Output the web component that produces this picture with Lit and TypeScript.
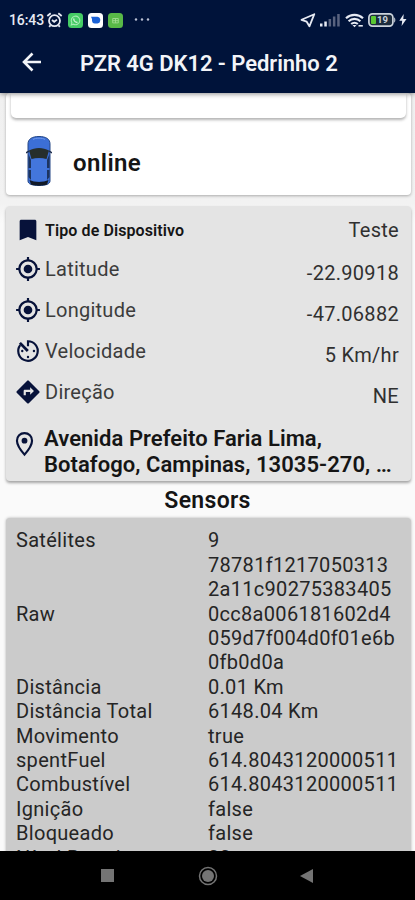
import { LitElement, html, css, svg } from "lit";
import { customElement } from "lit/decorators.js";

const target = svg`<path fill="currentColor" d="M12 8a4 4 0 1 0 0 8 4 4 0 0 0 0-8zm8.94 3A8.99 8.99 0 0 0 13 3.06V1h-2v2.06A8.99 8.99 0 0 0 3.06 11H1v2h2.06A8.99 8.99 0 0 0 11 20.94V23h2v-2.06A8.99 8.99 0 0 0 20.94 13H23v-2h-2.06zM12 19a7 7 0 1 1 0-14 7 7 0 0 1 0 14z"/>`;
const icons = {
  bookmark: svg`<path fill="currentColor" d="M18 2.500H6C4.800 2.500 4.300 3 4.300 4v17.500l7.700-3 7.700 3V4c0-1-.5-1.500-1.700-1.500z"/>`,
  target,
  speed: svg`<g fill="none" stroke="currentColor" stroke-width="2"><path d="M12 7.500V3a9 9 0 1 1-7.200 3.600"/><path d="M4.500 4.500 11.800 12" stroke-width="2.600"/></g><g fill="currentColor"><circle cx="12" cy="17.500" r="1.100"/><circle cx="17.500" cy="12" r="1.100"/><circle cx="6.700" cy="12" r="1.100"/></g>`,
  direction: svg`<path fill="currentColor" d="m22.400 11.300-9.700-9.700a1 1 0 0 0-1.410 0L1.600 11.300a1 1 0 0 0 0 1.410l9.700 9.700c.390.390 1.020.390 1.410 0l9.700-9.700a1 1 0 0 0 0-1.410zM14 14.500V12h-4v3H8v-4c0-.550.450-1 1-1h5V7.500l3.500 3.500-3.500 3.500z"/>`,
  place: svg`<path fill="none" stroke="currentColor" stroke-width="1.900" d="M12 1.900c-3.900 0-6.700 2.900-6.700 6.700 0 4.700 6.700 12.400 6.700 12.400S18.700 13.300 18.700 8.600c0-3.800-2.800-6.700-6.700-6.700z"/><circle cx="12" cy="8.600" r="2.600" fill="currentColor"/>`,
};

const details = [
  { icon: icons.bookmark, label: "Tipo de Dispositivo", value: "Teste", strong: true },
  { icon: icons.target, label: "Latitude", value: "-22.90918" },
  { icon: icons.target, label: "Longitude", value: "-47.06882" },
  { icon: icons.speed, label: "Velocidade", value: "5 Km/hr" },
  { icon: icons.direction, label: "Direção", value: "NE" },
];

const sensors: [string, string[]][] = [
  ["Satélites", ["9"]],
  ["Raw", ["78781f1217050313", "2a11c90275383405", "0cc8a006181602d4", "059d7f004d0f01e6b", "0fb0d0a"]],
  ["Distância", ["0.01 Km"]],
  ["Distância Total", ["6148.04 Km"]],
  ["Movimento", ["true"]],
  ["spentFuel", ["614.8043120000511"]],
  ["Combustível", ["614.8043120000511"]],
  ["Ignição", ["false"]],
  ["Bloqueado", ["false"]],
  ["Nível Bateria", ["00"]],
];

@customElement("status-bar")
class StatusBar extends LitElement {
  static styles = css`
    :host { display: flex; height: 40px; align-items: center; padding: 0 8px 0 9px; color: #e6eaf3; font-size: 14px; box-sizing: border-box; }
    svg { display: block; flex: none; }
    .time { width: 37px; white-space: nowrap; letter-spacing: -0.1px; font-weight: 500; font-size: 14px; }
    .left { display: flex; align-items: center; flex: 1; }
    .right { display: flex; align-items: center; }
    .alarm { margin-right: 5px; }
    .app { margin-right: 5px; }
    .dots { margin-left: 6px; }
    .nav { margin-right: 4px; }
    .signal { margin-right: 5px; }
    .wifi { margin-right: 4px; }
    .bolt { margin-left: 3px; }
  `;
  render() {
    return html`
      <div class="left">
        <span class="time">16:43</span>
        <svg class="alarm" width="17" height="16" viewBox="0 0 17 16" fill="none" stroke="currentColor" stroke-width="1.800"><circle cx="8.500" cy="8.700" r="5.500"/><path d="M1.300 4 4.700 1.200M15.700 4 12.300 1.200M6 8l2.200 1.800L11 7.600M4.500 13.200l-1.300 1.700M12.500 13.200l1.300 1.700"/></svg>
        <svg class="app" width="15" height="15" viewBox="0 0 15 15"><rect width="15" height="15" rx="3.500" fill="#45cc65"/><path d="M3.300 11.900l.6-2.200A4.300 4.300 0 1 1 5.500 11.200z" fill="none" stroke="#a5ecb3" stroke-width="1.100"/><path d="M5.700 5.400c0 2.300 1.800 4 3.800 4.100" fill="none" stroke="#c5f3ce" stroke-width="1.500"/></svg>
        <svg class="app" width="15" height="15" viewBox="0 0 15 15"><rect width="15" height="15" rx="3.500" fill="#fff"/><path d="M3 3.700h6.500a3 3 0 0 1 2.700 2.300v1.800a3 3 0 0 1-2.700 2.700H6.800A3 3 0 0 1 4 7.900V6z" fill="#1b61d6"/></svg>
        <svg class="app" width="15" height="15" viewBox="0 0 15 15"><rect width="15" height="15" rx="3.500" fill="#58b947"/><path d="M4.700 5.500h5.600v4.400H4.700zM7.500 5.500v4.400M4.700 7.700h5.600" fill="none" stroke="#a3db92" stroke-width=".9"/></svg>
        <svg class="dots" width="16" height="4" viewBox="0 0 16 4" fill="#b9c1d3"><circle cx="2" cy="1.500" r="1.200"/><circle cx="8" cy="1.500" r="1.200"/><circle cx="14" cy="1.500" r="1.200"/></svg>
      </div>
      <div class="right">
        <svg class="nav" width="16" height="15" viewBox="0 0 16 15" fill="none" stroke="currentColor" stroke-width="1.800" stroke-linejoin="round"><path d="M14.300 1.200 1.500 6.800l5.200 1.900 2.700 4.600z"/></svg>
        <svg class="signal" width="20" height="14" viewBox="0 0 20 14"><path fill="#e6eaf3" d="M0 10.500h2.500v3H0zM4.300 8.500h2.500v5H4.300z"/><path fill="#59637f" d="M8.600 6h2.500v7.500H8.600zM12.900 3.500h2.500v10h-2.500zM17.200 1h2.500v12.500h-2.500z"/></svg>
        <svg class="wifi" width="19" height="15" viewBox="0 0 19 15" fill="none" stroke="currentColor" stroke-width="2.200"><path d="M1 5.200a12.500 12.500 0 0 1 17 0M3.600 8.200a8.700 8.700 0 0 1 11.800 0M6.200 11a5 5 0 0 1 6.600 0"/><path d="m9.500 14.300-2-2.300h4z" fill="currentColor" stroke="none"/><path d="M13.500 12.800h4.300" stroke-width="1.600"/></svg>
        <svg width="28" height="14" viewBox="0 0 28 14"><rect x=".9" y=".9" width="24" height="12.200" rx="3.500" fill="#1b2b3d" stroke="#ccd4dc" stroke-width="1.700"/><path d="M26.200 4.500c1.500.5 1.500 4.500 0 5z" fill="#ccd4dc"/><rect x="3" y="3" width="5" height="8" rx="1" fill="#5ac832"/><text x="9" y="10.300" font-size="9.500" font-weight="700" fill="#ccd4dc">19</text></svg>
        <svg class="bolt" width="8" height="12" viewBox="0 0 8 12"><path d="M4.700 0 .3 6.800h2.900L2.600 12 7.500 4.900H4.300z" fill="#e6eaf3"/></svg>
      </div>`;
  }
}

@customElement("app-root")
class AppRoot extends LitElement {
  static styles = css`
    :host { display: flex; flex-direction: column; width: 415px; height: 900px; overflow: hidden; background: #fafafa; color: #151515; font-family: Roboto, "Liberation Sans", sans-serif; }
    * { box-sizing: border-box; }
    svg { display: block; flex: none; }
    header { flex: none; height: 93px; background: #00133a; color: #f2f4f8; box-shadow: 0 1px 5px rgba(0,0,0,.45); z-index: 1; }
    .bar { display: flex; align-items: center; height: 44px; padding: 0 21px; }
    .title { margin-left: 37px; padding-top: 2px; font-size: 22px; font-weight: 600; white-space: nowrap; letter-spacing: -.05px; }
    main { flex: 1; min-height: 0; overflow: hidden; padding: 0 4px 0 6px; background: linear-gradient(#f0f0f0, #f2f2f2 110px, #fafafa 130px); }
    .status { height: 102px; background: #fff; border-radius: 4px; box-shadow: 0 1px 3px rgba(0,0,0,.3); padding: 0 5px; }
    .previous { height: 25px; border-radius: 0 0 5px 5px; background: #fff; box-shadow: 0 2px 3px rgba(0,0,0,.3); }
    .online { display: flex; align-items: center; gap: 21px; padding: 17px 0 0 15px; font-size: 24px; font-weight: 600; letter-spacing: .4px; }
    .online span { padding-top: 3px; }
    .details { height: 275px; margin-top: 11px; padding: 4px 12px 0 9px; background: #e4e4e4; border-radius: 4px; box-shadow: 0 2px 3px rgba(0,0,0,.35); }
    .row { display: flex; align-items: center; height: 41px; }
    .row svg { margin-top: -2px; margin-left: -.5px; margin-right: .5px; }
    .row svg, .address svg { color: #07123a; }
    .label { margin-left: 4px; flex: 1; font-size: 20px; color: #3c3c3c; letter-spacing: .25px; padding-bottom: 2px; }
    .value { font-size: 20px; color: #303030; letter-spacing: .3px; padding-top: 6px; }
    .first { height: 39px; }
    .first svg { margin-top: 0; }
    .first .label { font-size: 16px; font-weight: 600; color: #151515; letter-spacing: .1px; padding: 2px 0 0; }
    .first .value { padding: 0; }
    .address { display: flex; align-items: flex-start; padding-top: 13px; font-size: 22px; line-height: 26px; font-weight: 600; white-space: nowrap; letter-spacing: .05px; }
    .address svg { margin: 5px 6px 0 -4px; }
    h2 { margin: 0; height: 37px; font-size: 23px; line-height: 39px; text-align: center; font-weight: 600; padding-right: 2px; letter-spacing: .3px; }
    .sensors { padding: 10.300px 0 20px 10px; background: #cbcbcb; border-radius: 4px 4px 0 0; box-shadow: 0 0 3px rgba(0,0,0,.3); font-size: 20px; line-height: 24.400px; color: #252525; letter-spacing: .3px; }
    .sensor { display: grid; grid-template-columns: 192px 1fr; align-items: center; white-space: nowrap; }
    nav { flex: none; height: 49px; background: #000; display: flex; align-items: center; padding-left: 101px; color: #747474; z-index: 1; }
    .home { margin-left: 84px; }
    .back { margin-left: 82px; }
  `;
  render() {
    return html`
      <header>
        <status-bar></status-bar>
        <div class="bar">
          <svg width="22" height="20" viewBox="0 0 22 20" fill="none" stroke="currentColor" stroke-width="2.600"><path d="M20 10H3.500M11.500 1.500 3 10l8.500 8.500"/></svg>
          <span class="title">PZR 4G DK12 - Pedrinho 2</span>
        </div>
      </header>
      <main>
        <section class="status">
          <div class="previous"></div>
          <div class="online">
            <svg width="26" height="52" viewBox="0 0 26 52">
              <path d="M2 9C2 4 6 1.500 13 1.500S24 4 24 9v37c0 3-4 4.500-11 4.500S2 49 2 46z" fill="#3c6fd6" stroke="#244786"/>
              <path d="M0 18l3-2M26 18l-3-2" stroke="#1c2b4a" stroke-width="1.500"/>
              <path d="M3 15.500c6-3.500 14-3.500 20 0L20.500 24c-5-1.500-10-1.500-15 0z" fill="#262e2c"/>
              <path d="M2.500 19 5 25v20l-2.500-3zM23.500 19 21 25v20l2.500-3z" fill="#1d345f"/>
              <path d="M2.500 34h2.500M21 34h2.500" stroke="#3c6fd6" stroke-width="2"/>
              <path d="M5 24.500c5-1.500 11-1.500 16 0V46H5z" fill="#4376dc"/>
              <path d="M3.500 45c5 2.500 14 2.500 19 0L21 49.500c-4 1.500-12 1.500-16 0z" fill="#121a28"/>
              <path d="M7 4.500C9 2.800 17 2.800 19 4.500" fill="none" stroke="#6f98ea"/>
            </svg>
            <span>online</span>
          </div>
        </section>
        <section class="details">
          ${details.map((d) => html`<div class="row ${d.strong ? "first" : ""}">
            <svg width="26" height="26" viewBox="0 0 24 24">${d.icon}</svg>
            <span class="label">${d.label}</span><span class="value">${d.value}</span>
          </div>`)}
          <div class="address">
            <svg width="27" height="27" viewBox="0 0 24 24">${icons.place}</svg>
            <div>Avenida Prefeito Faria Lima,<br />Botafogo, Campinas, 13035-270, …</div>
          </div>
        </section>
        <h2>Sensors</h2>
        <section class="sensors">
          ${sensors.map(([name, lines]) => html`<div class="sensor"><span>${name}</span><div>${lines.map((l) => html`<div>${l}</div>`)}</div></div>`)}
        </section>
      </main>
      <nav>
        <svg width="13" height="13" viewBox="0 0 13 13"><rect width="13" height="13" fill="currentColor"/></svg>
        <svg class="home" width="20" height="20" viewBox="0 0 20 20"><circle cx="10" cy="10" r="8.500" fill="none" stroke="currentColor" stroke-width="1.500"/><circle cx="10" cy="10" r="6" fill="currentColor"/></svg>
        <svg class="back" width="13" height="14" viewBox="0 0 13 14"><path d="M13 0v14L0 7z" fill="currentColor"/></svg>
      </nav>`;
  }
}
